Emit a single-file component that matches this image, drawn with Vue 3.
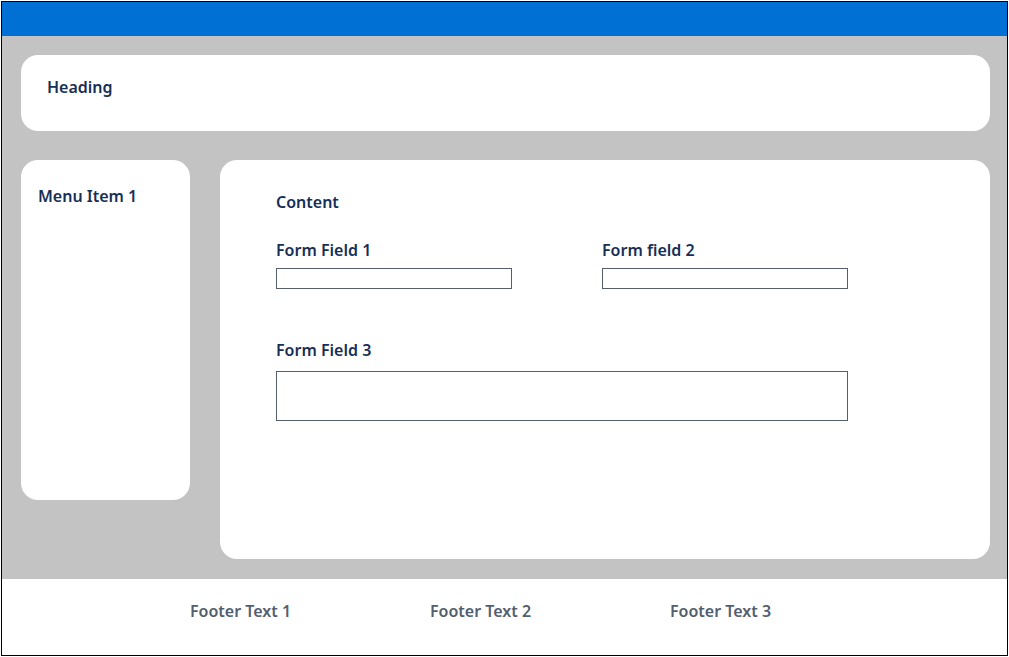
<script setup>
import { ref } from 'vue'

const fields = ref([
  { id: 'field-1', label: 'Form Field 1', value: '' },
  { id: 'field-2', label: 'Form field 2', value: '' }
])
const notes = ref('')
const footerItems = ['Footer Text 1', 'Footer Text 2', 'Footer Text 3']
</script>

<template>
  <div class="page">
    <header class="topbar"></header>
    <div class="body">
      <section class="card heading">
        <h1>Heading</h1>
      </section>
      <div class="columns">
        <nav class="card menu">
          <a href="#">Menu Item 1</a>
        </nav>
        <main class="card content">
          <h2>Content</h2>
          <form class="form" @submit.prevent>
            <div v-for="field in fields" :key="field.id" class="field">
              <label :for="field.id">{{ field.label }}</label>
              <input :id="field.id" v-model="field.value" type="text" />
            </div>
            <div class="field wide">
              <label for="field-3">Form Field 3</label>
              <textarea id="field-3" v-model="notes"></textarea>
            </div>
          </form>
        </main>
      </div>
    </div>
    <footer class="footer">
      <span v-for="item in footerItems" :key="item">{{ item }}</span>
    </footer>
  </div>
</template>

<style>
body {
  background: #fff;
}
</style>

<style scoped>
* {
  box-sizing: border-box;
}
.page {
  display: flex;
  flex-direction: column;
  min-height: calc(100vh - 2px);
  margin: 1px;
  border: 1px solid #000;
  color: #172f55;
  font-family: "Noto Sans", "Open Sans", sans-serif;
  font-size: 16px;
  font-weight: 600;
  line-height: 20px;
}
.topbar {
  height: 34px;
  background: #0070d5;
}
.body {
  display: flex;
  flex: 1;
  flex-direction: column;
  gap: 29px;
  padding: 19px 17px 20px 19px;
  background: #c3c3c3;
}
.card {
  border-radius: 17px;
  background: #fff;
}
.heading {
  min-height: 76px;
  padding: 22px 26px;
}
h1,
h2 {
  margin: 0;
  font-size: 16px;
  font-weight: 600;
}
.columns {
  display: grid;
  flex: 1;
  grid-template-columns: 169px 1fr;
  gap: 30px;
  align-items: start;
}
.menu {
  min-height: 340px;
  padding: 26px 17px;
}
.menu a {
  color: inherit;
  text-decoration: none;
}
.content {
  align-self: stretch;
  padding: 32px 142px 32px 56px;
}
.form {
  display: grid;
  grid-template-columns: 235fr 245fr;
  gap: 51px 90px;
  margin-top: 28px;
}
.field {
  display: flex;
  flex-direction: column;
  gap: 8px;
}
.wide {
  grid-column: 1 / -1;
  gap: 11px;
}
input,
textarea {
  display: block;
  width: 100%;
  margin: 0;
  padding: 2px 6px;
  border: 1px solid #555f69;
  border-radius: 0;
  background: #fff;
  color: inherit;
  font: inherit;
  font-size: 14px;
  line-height: 16px;
}
input {
  height: 21px;
}
textarea {
  height: 50px;
  resize: none;
}
.footer {
  display: grid;
  grid-template-columns: repeat(3, 240px);
  min-height: 76px;
  padding: 22px 0 22px 188px;
  color: #535f6e;
}
</style>
